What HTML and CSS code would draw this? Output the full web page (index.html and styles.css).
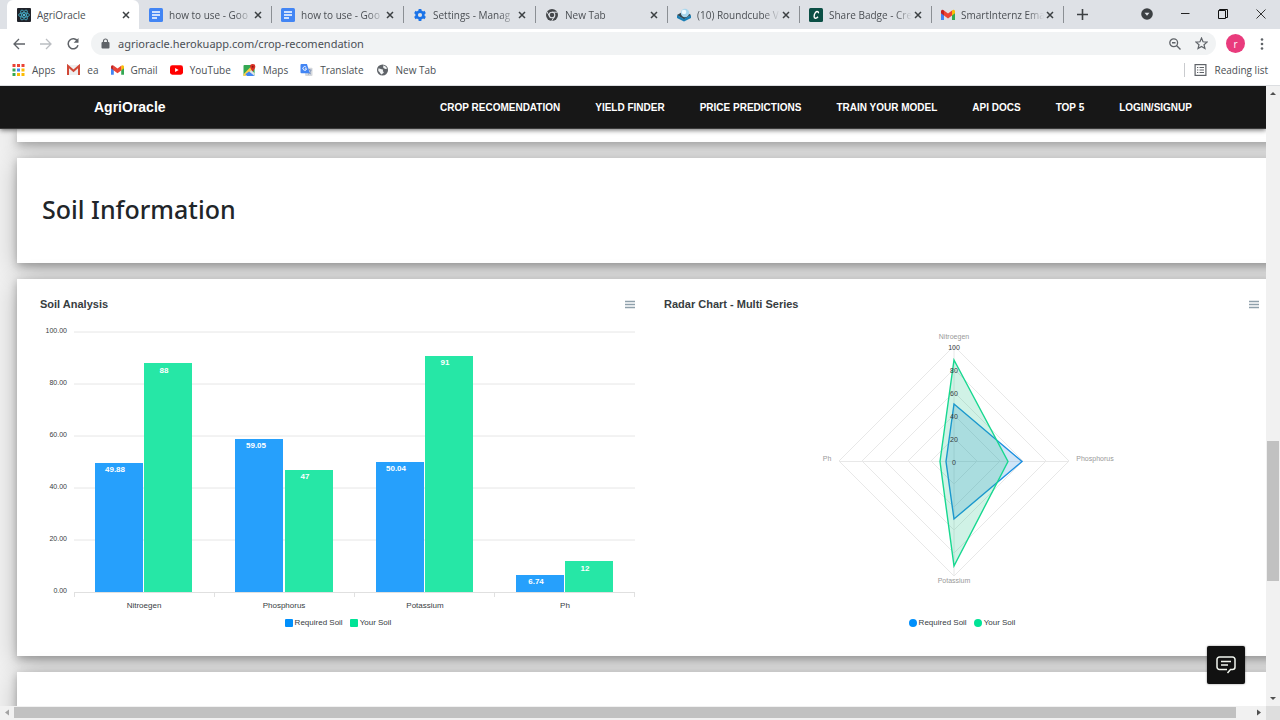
FILE: index.html
```html
<!DOCTYPE html>
<html lang="en">
<head>
<meta charset="utf-8">
<title>AgriOracle</title>
<link rel="stylesheet" href="styles.css">
</head>
<body>
<svg class="defs" width="0" height="0" aria-hidden="true">
  <symbol id="x" viewBox="0 0 8 8"><path d="M1 1l6 6M7 1l-6 6" stroke="#3c4043" stroke-width="1.5" fill="none"/></symbol>
  <symbol id="doc" viewBox="0 0 14 14"><rect width="14" height="14" rx="1.5" fill="#4285f4"/><path d="M3 4h8M3 7h8M3 10h5" stroke="#fff" stroke-width="1.4"/></symbol>
  <symbol id="gmail" viewBox="0 0 14 11"><path d="M0 1.5V10.500h3V5.500z" fill="#4285f4"/><path d="M11 5.500v5h3v-9z" fill="#34a853"/><path d="M11 1v5l3-2.300V1.500Q13-.5 11 1z" fill="#fbbc04"/><path d="M0 1.500v2.200L3 6V1Q1-.5 0 1.500z" fill="#c5221f"/><path d="M3 1v5l4 3 4-3V1L7 4z" fill="#ea4335"/></symbol>
  <symbol id="burger" viewBox="0 0 12 9"><path d="M1 1.500h10M1 4.500h10M1 7.500h10" stroke="#8fa0ab" stroke-width="1.300"/></symbol>
</svg>

<header class="browser">
  <div class="tabstrip">
    <div class="tabs">
      <div class="tab tab-active">
        <svg class="favicon" viewBox="0 0 14 14"><rect width="14" height="14" rx="1" fill="#20232a"/><g fill="none" stroke="#48b7d2" stroke-width=".8"><ellipse cx="7" cy="7" rx="5.500" ry="2.200"/><ellipse cx="7" cy="7" rx="5.500" ry="2.200" transform="rotate(60 7 7)"/><ellipse cx="7" cy="7" rx="5.500" ry="2.200" transform="rotate(120 7 7)"/></g><circle cx="7" cy="7" r="1.100" fill="#61dafb"/></svg>
        <span class="tab-title">AgriOracle</span><button class="tab-close" aria-label="Close tab"><svg><use href="#x"/></svg></button>
      </div>
      <div class="tab">
        <svg class="favicon"><use href="#doc"/></svg>
        <span class="tab-title">how to use - Goo</span><button class="tab-close" aria-label="Close tab"><svg><use href="#x"/></svg></button>
      </div>
      <div class="tab">
        <svg class="favicon"><use href="#doc"/></svg>
        <span class="tab-title">how to use - Goo</span><button class="tab-close" aria-label="Close tab"><svg><use href="#x"/></svg></button>
      </div>
      <div class="tab">
        <svg class="favicon" viewBox="0 0 14 14"><circle cx="7" cy="7" r="3.400" fill="none" stroke="#1a73e8" stroke-width="2.600"/><path d="M7 1v2.500M7 10.500V13M1.800 4l2.200 1.250M10 8.750L12.200 10M1.800 10L4 8.750M10 5.250L12.200 4" stroke="#1a73e8" stroke-width="2.800"/></svg>
        <span class="tab-title">Settings - Manag</span><button class="tab-close" aria-label="Close tab"><svg><use href="#x"/></svg></button>
      </div>
      <div class="tab">
        <svg class="favicon" viewBox="0 0 14 14"><circle cx="7" cy="7" r="6" fill="#45484b"/><circle cx="7" cy="7" r="2.800" fill="none" stroke="#dee1e6" stroke-width="1.100"/><path d="M7 4.200h5.500M4.600 8.400L1.900 3.700M9.400 8.400L6.700 13" stroke="#dee1e6" stroke-width="1"/></svg>
        <span class="tab-title">New Tab</span><button class="tab-close" aria-label="Close tab"><svg><use href="#x"/></svg></button>
      </div>
      <div class="tab">
        <svg class="favicon" viewBox="0 0 14 14"><path d="M0 7l7-4 7 4-7 4.500z" fill="#37474f"/><circle cx="8" cy="5" r="4.200" fill="#a9d7ee"/><circle cx="7" cy="4" r="2.300" fill="#eef9ff"/><path d="M0 7l7 4 7-4v3L7 13.500 0 10z" fill="#1c7fb5"/></svg>
        <span class="tab-title">(10) Roundcube V</span><button class="tab-close" aria-label="Close tab"><svg><use href="#x"/></svg></button>
      </div>
      <div class="tab">
        <svg class="favicon" viewBox="0 0 14 14"><rect width="14" height="14" rx="1.500" fill="#0b4f45"/><path d="M9.300 5.200c.7-1.800-1.600-2.300-2.900-.5C4.700 7 4.700 10 6.300 10.200c1.100.1 2-.6 2.700-1.500" stroke="#fff" stroke-width="1.400" fill="none"/></svg>
        <span class="tab-title">Share Badge - Cre</span><button class="tab-close" aria-label="Close tab"><svg><use href="#x"/></svg></button>
      </div>
      <div class="tab">
        <svg class="favicon"><use href="#gmail"/></svg>
        <span class="tab-title">SmartInternz Ema</span><button class="tab-close" aria-label="Close tab"><svg><use href="#x"/></svg></button>
      </div>
    </div>
    <button class="new-tab" aria-label="New tab"><svg width="11" height="11" viewBox="0 0 11 11"><path d="M5.500 0v11M0 5.500h11" stroke="#3c4043" stroke-width="1.600"/></svg></button>
    <div class="window-controls">
      <button aria-label="Search tabs"><svg width="12" height="12" viewBox="0 0 12 12"><circle cx="6" cy="6" r="5.800" fill="#3c4043"/><path d="M3.500 4.700h5L6 7.800z" fill="#dee1e6"/></svg></button>
      <button aria-label="Minimize"><svg width="10" height="10" viewBox="0 0 10 10"><path d="M1 4.500h8.500" stroke="#222"/></svg></button>
      <button aria-label="Restore"><svg width="10" height="10" viewBox="0 0 10 10"><path d="M.5 1.500h7v8h-7zM1.500 1.500v-1h8v8h-2" stroke="#111" fill="none"/></svg></button>
      <button aria-label="Close window"><svg width="10" height="10" viewBox="0 0 10 10"><path d="M.5.5l9 9M9.500.5l-9 9" stroke="#333"/></svg></button>
    </div>
  </div>

  <div class="toolbar">
    <button aria-label="Back"><svg width="12" height="12" viewBox="0 0 12 12"><path d="M12 6H1M6 1L1 6l5 5" stroke="#5f6368" stroke-width="1.300" fill="none"/></svg></button>
    <button aria-label="Forward"><svg width="12" height="12" viewBox="0 0 12 12"><path d="M0 6h11M6 1l5 5-5 5" stroke="#bbbec2" stroke-width="1.300" fill="none"/></svg></button>
    <button aria-label="Reload"><svg width="12" height="12" viewBox="0 0 12 12"><path d="M10.500 3.200A5 5 0 1 0 11 7.300" stroke="#5f6368" stroke-width="1.500" fill="none"/><path d="M11.500 0v4.800H6.700z" fill="#5f6368"/></svg></button>
    <div class="omnibox">
      <svg width="9" height="11" viewBox="0 0 9 11"><rect x=".5" y="4" width="8" height="6.500" rx="1" fill="#5f6368"/><path d="M2.500 4.500V3a2 2 0 0 1 4 0v1.500" stroke="#5f6368" stroke-width="1.200" fill="none"/></svg>
      <input class="url" type="text" aria-label="Address" value="agrioracle.herokuapp.com/crop-recomendation">
      <button aria-label="Zoom"><svg width="12" height="12" viewBox="0 0 12 12"><circle cx="4.700" cy="4.700" r="3.900" stroke="#5f6368" stroke-width="1.300" fill="none"/><path d="M7.500 7.500L11.500 11.500M3 4.700h3.500" stroke="#5f6368" stroke-width="1.400"/></svg></button>
      <button aria-label="Bookmark this page"><svg width="13" height="13" viewBox="0 0 12 12"><path d="M6 1l1.400 3.400 3.700.3-2.800 2.400.9 3.600L6 8.800l-3.200 1.900.9-3.600L.9 4.700l3.700-.3z" stroke="#5f6368" stroke-width="1.100" fill="none"/></svg></button>
    </div>
    <button class="avatar" aria-label="Profile">r</button>
    <button class="kebab" aria-label="Menu"><svg width="4" height="12" viewBox="0 0 4 12"><g fill="#5f6368"><circle cx="2" cy="1.500" r="1.300"/><circle cx="2" cy="6" r="1.300"/><circle cx="2" cy="10.500" r="1.300"/></g></svg></button>
  </div>

  <nav class="bookmarks" aria-label="Bookmarks">
    <a href="#"><svg viewBox="0 0 12 12"><path d="M0 0h3v3H0zM4.500 0h3v3h-3zM9 0h3v3H9z" fill="#ea4335"/><path d="M0 4.500h3v3H0z" fill="#34a853"/><path d="M4.500 4.500h3v3h-3z" fill="#4285f4"/><path d="M9 4.500h3v3H9zM9 9h3v3H9zM4.500 9h3v3h-3z" fill="#fbbc04"/><path d="M0 9h3v3H0z" fill="#34a853"/></svg>Apps</a>
    <a href="#"><svg viewBox="0 0 13 10"><path d="M0 0h13v10H0z" fill="#eee"/><path d="M1 10V1l5.500 4.800L12 1v9" stroke="#d14836" stroke-width="2" fill="none"/></svg>ea</a>
    <a href="#"><svg><use href="#gmail"/></svg>Gmail</a>
    <a href="#"><svg viewBox="0 0 14 10"><rect width="14" height="10" rx="2.500" fill="#f00"/><path d="M5.500 2.800v4.400L9.300 5z" fill="#fff"/></svg>YouTube</a>
    <a href="#"><svg viewBox="0 0 13 13"><rect y="1" width="12" height="12" rx="1" fill="#34a853"/><path d="M1 13l7-7 4 4v3z" fill="#dfe4e8"/><path d="M0 11l9-9 2 2-9 9H0z" fill="#fbd04a"/><path d="M6 8l6 5H4L2 11z" fill="#4285f4"/><path d="M10 0a2.800 2.800 0 0 1 2.800 3C12.800 5 10 8 10 8S7.200 5 7.200 3A2.800 2.800 0 0 1 10 0z" fill="#d93025"/><circle cx="10" cy="3" r="1" fill="#8c1a11"/></svg>Maps</a>
    <a href="#"><svg viewBox="0 0 13 13"><rect x="5" y="4" width="8" height="9" rx="1" fill="#d5d8dc"/><path d="M7.500 6.500H12M9.800 5.500v1M8.200 11.200c2-1 2.800-2.500 3-4.500M8.400 7.500c.6 1.500 1.700 2.800 3 3.500" stroke="#6b84b0" stroke-width=".8" fill="none"/><path d="M1 0h6l3 10H1a1 1 0 0 1-1-1V1a1 1 0 0 1 1-1z" fill="#4285f4"/><path d="M6.200 3.600a2 2 0 1 0 .4 1.600H4.700" stroke="#fff" fill="none"/></svg>Translate</a>
    <a href="#"><svg viewBox="0 0 13 13"><circle cx="6.500" cy="6.500" r="6" fill="#5f6368"/><path d="M2 5c2-.5 3 1 4.500 1S6 8 7.500 8.500 6 11 5.500 11.500C4 10 3.500 8.500 2 7.500zM7 1.500C8 3 6.500 3.500 8 4.500s2 1 3.500.5C11 3 9 1.500 7 1.500z" fill="#f1f3f4"/></svg>New Tab</a>
    <a href="#" class="reading"><svg viewBox="0 0 12 12"><rect x=".6" y=".6" width="10.800" height="10.800" stroke="#5f6368" stroke-width="1.200" fill="none"/><path d="M2.500 3.500h1.300M2.500 6h1.300M2.500 8.500h1.300M5 3.500h4.500M5 6h4.500M5 8.500h4.500" stroke="#5f6368"/></svg>Reading list</a>
  </nav>
</header>

<div class="viewport">
  <div class="page">
    <nav class="navbar" aria-label="Main">
      <a class="brand" href="#">AgriOracle</a>
      <div class="nav-links">
        <a href="#">CROP RECOMENDATION</a>
        <a href="#">YIELD FINDER</a>
        <a href="#">PRICE PREDICTIONS</a>
        <a href="#">TRAIN YOUR MODEL</a>
        <a href="#">API DOCS</a>
        <a href="#">TOP 5</a>
        <a href="#">LOGIN/SIGNUP</a>
      </div>
    </nav>
    <main class="cards">
      <section class="card card-tail"></section>
      <section class="card card-title"><h1>Soil Information</h1></section>
      <section class="card card-charts">
        <article class="chart">
          <header class="chart-head"><h2>Soil Analysis</h2><button aria-label="Chart menu"><svg width="12" height="9"><use href="#burger"/></svg></button></header>
          <svg class="plot" viewBox="0 0 596 294" role="img" aria-label="Soil analysis bar chart">
            <path class="grid" d="M34 12H595M34 64H595M34 116H595M34 168H595M34 220H595"/>
            <path class="axis" d="M34 272.500H595M34.500 272v5M174.500 272v5M314.500 272v5M454.500 272v5M594.500 272v5"/>
            <g class="bar-a"><rect x="55" y="143" width="48" height="129"/><rect x="195" y="119" width="48" height="153"/><rect x="336" y="142" width="48" height="130"/><rect x="476" y="255" width="48" height="17"/></g>
            <g class="bar-b"><rect x="104" y="43" width="48" height="229"/><rect x="245" y="150" width="48" height="122"/><rect x="385" y="36" width="48" height="236"/><rect x="525" y="241" width="48" height="31"/></g>
            <g class="value"><text x="75" y="152">49.88</text><text x="124" y="53">88</text><text x="216" y="128">59.05</text><text x="265" y="159">47</text><text x="356" y="151">50.04</text><text x="405" y="45">91</text><text x="496" y="264">6.74</text><text x="545" y="251">12</text></g>
            <g class="y-label"><text x="27" y="13">100.00</text><text x="27" y="65">80.00</text><text x="27" y="117">60.00</text><text x="27" y="169">40.00</text><text x="27" y="221">20.00</text><text x="27" y="273">0.00</text></g>
            <g class="x-label"><text x="104" y="288">Nitroegen</text><text x="244" y="288">Phosphorus</text><text x="385" y="288">Potassium</text><text x="525" y="288">Ph</text></g>
          </svg>
          <ul class="legend"><li class="key-a">Required Soil</li><li class="key-b">Your Soil</li></ul>
        </article>
        <article class="chart">
          <header class="chart-head"><h2>Radar Chart - Multi Series</h2><button aria-label="Chart menu"><svg width="12" height="9"><use href="#burger"/></svg></button></header>
          <svg class="plot" viewBox="0 0 596 294" role="img" aria-label="Soil radar chart">
            <g class="web"><path d="M290 26L405 141 290 256 175 141z"/><path d="M290 49L382 141 290 233 198 141z"/><path d="M290 72L359 141 290 210 221 141z"/><path d="M290 95L336 141 290 187 244 141z"/><path d="M290 118L313 141 290 164 267 141z"/><path d="M290 26V256M175 141.500H405"/></g>
            <path class="area-a" d="M290 84L358 141.500 290 199 282 141.500z"/>
            <path class="area-b" d="M290 40L344 141.500 290 246 276 141.500z"/>
            <g class="scale"><text x="290" y="30">100</text><text x="290" y="53">80</text><text x="290" y="76">60</text><text x="290" y="99">40</text><text x="290" y="122">20</text><text x="290" y="145">0</text></g>
            <g class="spoke"><text x="290" y="19">Nitroegen</text><text x="431" y="141">Phosphorus</text><text x="290" y="263">Potassium</text><text x="163" y="141">Ph</text></g>
          </svg>
          <ul class="legend legend-round"><li class="key-a">Required Soil</li><li class="key-b">Your Soil</li></ul>
        </article>
      </section>
      <section class="card card-next"></section>
    </main>
    <button class="chat" aria-label="Chat"><svg width="20" height="18" viewBox="0 0 20 18"><path d="M11 13.500H3.500a2.500 2.500 0 0 1-2.500-2.500V3.500A2.500 2.500 0 0 1 3.500 1h13A2.500 2.500 0 0 1 19 3.500V11a2.500 2.500 0 0 1-2.500 2.500h-2l-3 3.500M5 5.500h10M5 9h7" stroke="#f1f5ee" stroke-width="1.500" fill="none"/></svg></button>
  </div>
  <div class="vbar"><svg viewBox="0 0 14 14"><path d="M4 9l3-3 3 3z" fill="#505050"/></svg><i></i><svg viewBox="0 0 14 14"><path d="M4 5l3 3 3-3z" fill="#505050"/></svg></div>
  <div class="hbar"><svg viewBox="0 0 14 14"><path d="M9 3.500v6l-4-3z" fill="#a3a3a3"/></svg><i></i><svg viewBox="0 0 14 14"><path d="M5 3.500v6l4-3z" fill="#505050"/></svg></div>
</div>
</body>
</html>
```

FILE: styles.css
```css
* { box-sizing: border-box; }
body {
  margin: 0;
  height: 100vh;
  display: flex;
  flex-direction: column;
  overflow: hidden;
  font-family: "Liberation Sans", Arial, sans-serif;
}
button { border: 0; padding: 0; background: none; display: flex; align-items: center; justify-content: center; font: inherit; }
a { color: inherit; text-decoration: none; }
h1, h2 { margin: 0; }
svg { display: block; flex: none; }
.defs { position: absolute; }

/* Browser frame */
.browser { flex: none; font-family: "Open Sans", "Noto Sans", sans-serif; font-size: 10px; color: #4b4f54; background: #fff; border-bottom: 1px solid #dcdee1; }
.tabstrip { display: flex; height: 29px; background: #dee1e6; padding-left: 7px; }
.tabs { display: flex; flex: 0 1 1056px; min-width: 0; }
.tab { flex: 1 1 0; min-width: 0; display: flex; align-items: center; padding: 0 7px 0 10px; position: relative; }
.tab::after { content: ""; position: absolute; right: -1px; top: 6px; height: 17px; border-right: 1px solid #8b8f94; }
.tab-active { background: #fff; border-radius: 6px 6px 0 0; }
.tab-active::after { display: none; }
.favicon { width: 14px; height: 14px; margin-right: 6px; }
.tab-title { flex: 1; min-width: 0; overflow: hidden; white-space: nowrap; -webkit-mask-image: linear-gradient(to right, #000 80%, transparent); mask-image: linear-gradient(to right, #000 80%, transparent); }
.tab-active .tab-title { -webkit-mask-image: none; mask-image: none; }
.tab-close { width: 12px; height: 16px; flex: none; }
.tab-close svg { width: 8px; height: 8px; }
.new-tab { width: 38px; }
.window-controls { display: flex; margin-left: auto; height: 27px; }
.window-controls button { width: 38px; }

.toolbar { display: flex; align-items: center; height: 29px; padding: 0 10px 0 5px; }
.toolbar > button { width: 27px; height: 24px; }
.omnibox { flex: 1; display: flex; align-items: center; height: 23px; margin: 0 5px; padding: 0 1px 0 10px; border-radius: 12px; background: #f1f3f4; }
.omnibox button { width: 27px; height: 20px; }
.url { flex: 1; min-width: 0; border: 0; outline: 0; padding: 0 8px; background: none; font: 11px/20px "Noto Sans", "Open Sans", sans-serif; color: #4b4f54; }
.toolbar > .avatar { width: 19px; height: 19px; border-radius: 50%; background: #e93b7c; color: #fff; font-size: 10px; margin: 0 6px 0 5px; }
.toolbar > .kebab { width: 16px; margin-left: 3px; }

.bookmarks { display: flex; align-items: center; height: 27px; padding: 0 12px 3px; gap: 12px; white-space: nowrap; }
.bookmarks a { display: flex; align-items: center; gap: 7px; }
.bookmarks svg { width: 13px; height: 12px; }
.bookmarks .reading { margin-left: auto; padding-left: 9px; border-left: 1px solid #c9cbce; }

/* Scrolling viewport */
.viewport { flex: 1; min-height: 0; display: grid; grid-template-columns: minmax(0, 1fr) 14px; grid-template-rows: minmax(0, 1fr) 14px; background: #dedede; }
.page { position: relative; overflow: hidden; background: #f1f1f1; display: flex; flex-direction: column; }
.vbar { display: grid; grid-template-rows: 14px 341fr 140fr 111fr 14px; background: #f1f1f1; }
.vbar i { grid-row: 3; background: #c1c1c1; margin: 0 1px; }
.vbar svg:last-child { grid-row: 5; }
.hbar { display: grid; grid-template-columns: 14px 1222fr 16fr 14px; background: #f1f1f1; }
.hbar i { background: #c1c1c1; margin: 1px 0 2px; }
.hbar svg:last-child { grid-column: 4; }

/* Site navigation */
.navbar { flex: none; position: relative; z-index: 2; display: flex; align-items: center; justify-content: space-between; height: 43px; padding: 0 74px 0 94px; background: #171717; border-bottom: 1px solid #3a3a3a; box-shadow: 0 1px 5px rgba(0, 0, 0, .6); color: #fff; font-weight: 700; }
.brand { font-size: 14px; }
.nav-links { display: flex; gap: 35px; font-size: 10px; white-space: nowrap; }

/* Cards */
.cards { flex: 1; min-height: 0; display: flex; flex-direction: column; gap: 16px; padding-left: 17px; margin-right: -25px; }
.card { flex: none; position: relative; background: #fff; box-shadow: 0 3px 8px rgba(0, 0, 0, .26), 0 6px 24px rgba(0, 0, 0, .24); }
.card-tail { height: 13px; }
.card-title { padding: 31px 25px 34px; }
.card-title h1 { font: 500 25px/40px "Noto Sans", "Open Sans", sans-serif; color: #212529; }
.card-next { height: 80px; }
.card-charts { display: grid; grid-template-columns: 1fr 1fr; padding: 9px 13px 25px; }
.chart { min-width: 0; padding: 0 18px 0 10px; }
.chart-head { display: flex; align-items: center; justify-content: space-between; height: 32px; }
.chart-head h2 { font-size: 11px; color: #373d3f; }
.chart-head button { height: 16px; }
.plot { width: 100%; height: auto; }

.grid { stroke: #e6e6e6; fill: none; }
.axis { stroke: #e0e0e0; fill: none; }
.bar-a { fill: #26a0fc; }
.bar-b { fill: #26e7a6; }
.value { fill: #fff; font-size: 8px; font-weight: 700; text-anchor: middle; }
.y-label { fill: #373d3f; font-size: 7px; text-anchor: end; }
.x-label { fill: #373d3f; font-size: 8px; text-anchor: middle; }

.web { fill: none; stroke: #e8e8e8; }
.area-a { fill: rgba(20, 125, 215, .2); stroke: #1c8fe0; stroke-width: 1.400; }
.area-b { fill: rgba(20, 190, 130, .2); stroke: #17d890; stroke-width: 1.400; }
.scale { fill: #373d3f; font-size: 7px; text-anchor: middle; }
.spoke { fill: #999; font-size: 7px; text-anchor: middle; }

.legend { display: flex; justify-content: center; gap: 7px; margin: 0; padding: 0; list-style: none; font-size: 8px; line-height: 17px; color: #373d3f; }
.legend li { display: flex; align-items: center; gap: 2px; }
.legend li::before { content: ""; width: 8px; height: 8px; border-radius: 1px; }
.legend .key-a::before { background: #008ffb; }
.legend .key-b::before { background: #00e396; }
.legend-round li::before { border-radius: 50%; }

.chat { position: absolute; z-index: 3; right: 21px; bottom: 22px; width: 38px; height: 38px; background: #111; border-radius: 2px; box-shadow: 0 0 2px rgba(0, 0, 0, .5); }
```
